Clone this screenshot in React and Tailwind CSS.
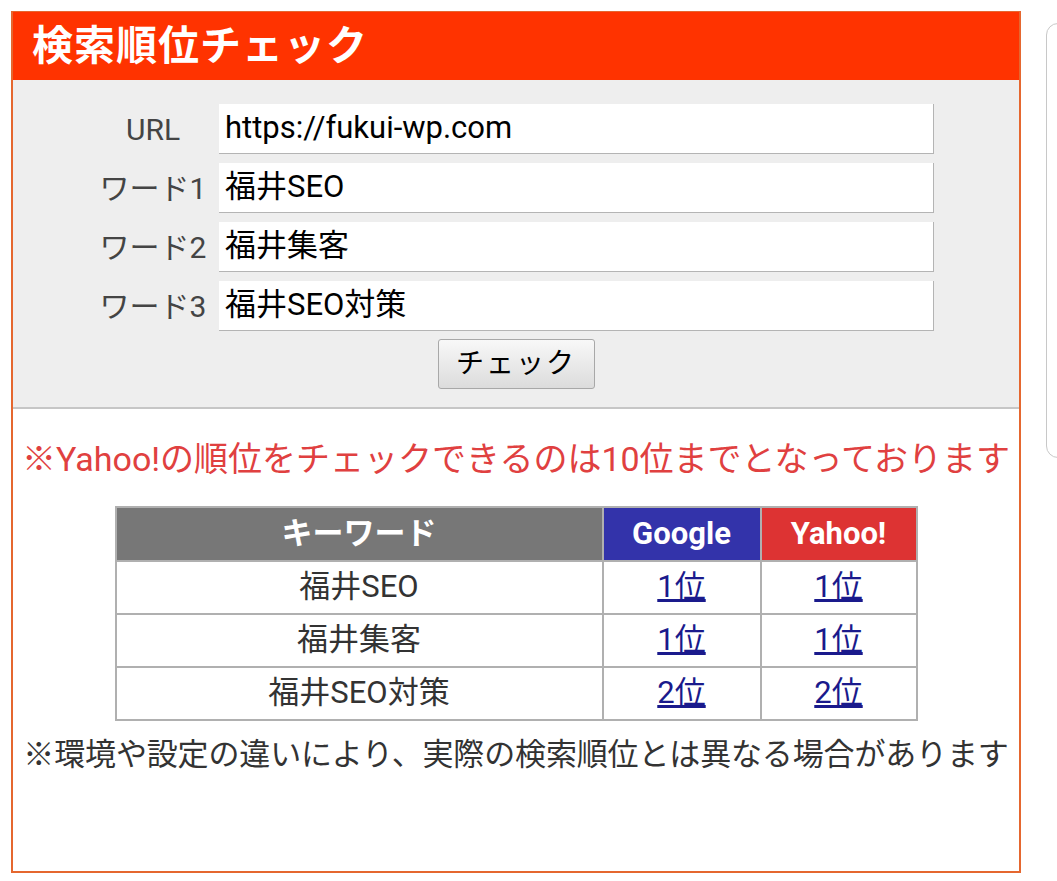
import React from "react";

const rows = [
  { word: "福井SEO", google: "1位", yahoo: "1位" },
  { word: "福井集客", google: "1位", yahoo: "1位" },
  { word: "福井SEO対策", google: "2位", yahoo: "2位" },
];

const fields = [
  { label: "URL", value: "https://fukui-wp.com" },
  { label: "ワード1", value: "福井SEO" },
  { label: "ワード2", value: "福井集客" },
  { label: "ワード3", value: "福井SEO対策" },
];

const App = () => {
  return (
    <div
      className="flex w-[1057px] h-[881px] overflow-hidden bg-white pt-[11px] pl-[11px]"
      style={{ fontFamily: 'Roboto, "Noto Sans CJK JP", sans-serif' }}
    >
      <div className="flex flex-col w-[1010px] h-[862px] shrink-0 border-2 border-t border-[#e5672f]">
        <div className="h-[68px] bg-[#ff3300] flex items-center pl-[19px]">
          <h1 className="text-white font-bold text-[41px] leading-none tracking-[1px]">検索順位チェック</h1>
        </div>

        <div className="bg-[#eeeeee] border-b-2 border-[#c6c6c6] pt-[24px] pb-[18px]">
          <div className="flex flex-col gap-[9px] ml-[80px]">
            {fields.map((f) => (
              <div key={f.label} className="flex items-center gap-[6px]">
                <div className="w-[120px] text-center text-[30px] text-[#444]">{f.label}</div>
                <div className="w-[715px] h-[50px] bg-white border-r border-b border-[#b4b4b4] flex items-center px-[6px] text-[31px] text-black">
                  {f.value}
                </div>
              </div>
            ))}
          </div>
          <div className="flex justify-center mt-[8px]">
            <button className="w-[157px] h-[50px] rounded-[3px] border border-[#a8a8a8] bg-gradient-to-b from-[#f8f8f8] to-[#dcdcdc] text-[28px] text-black tracking-[2px]">
              チェック
            </button>
          </div>
        </div>

        <p className="text-center text-[34px] text-[#e04040] mt-[28px] leading-[44px]">
          ※Yahoo!の順位をチェックできるのは10位までとなっております
        </p>

        <table className="mx-auto mt-[25px] w-[803px] border-collapse border-2 border-[#b0b0b0] text-[31px]">
          <thead>
            <tr className="h-[54px] text-white font-bold">
              <th className="bg-[#777777] border-2 border-[#b0b0b0] w-[487px]">キーワード</th>
              <th className="bg-[#3333aa] border-2 border-[#b0b0b0] w-[158px]">Google</th>
              <th className="bg-[#dd3333] border-2 border-[#b0b0b0]">Yahoo!</th>
            </tr>
          </thead>
          <tbody>
            {rows.map((r) => (
              <tr key={r.word} className="h-[53px]">
                <td className="border-2 border-[#b0b0b0] text-center text-[#333]">{r.word}</td>
                <td className="border-2 border-[#b0b0b0] text-center">
                  <a href="#" className="underline text-[#1a1a8c]">{r.google}</a>
                </td>
                <td className="border-2 border-[#b0b0b0] text-center">
                  <a href="#" className="underline text-[#1a1a8c]">{r.yahoo}</a>
                </td>
              </tr>
            ))}
          </tbody>
        </table>

        <p className="text-center text-[31px] tracking-[-0.15px] text-[#333] mt-[13px] leading-[42px]">
          ※環境や設定の違いにより、実際の検索順位とは異なる場合があります
        </p>
      </div>

      <div className="ml-[25px] mt-[12px] w-[40px] h-[435px] shrink-0 border border-[#c8c8c8] rounded-[12px]" />
    </div>
  );
};

export default App;
